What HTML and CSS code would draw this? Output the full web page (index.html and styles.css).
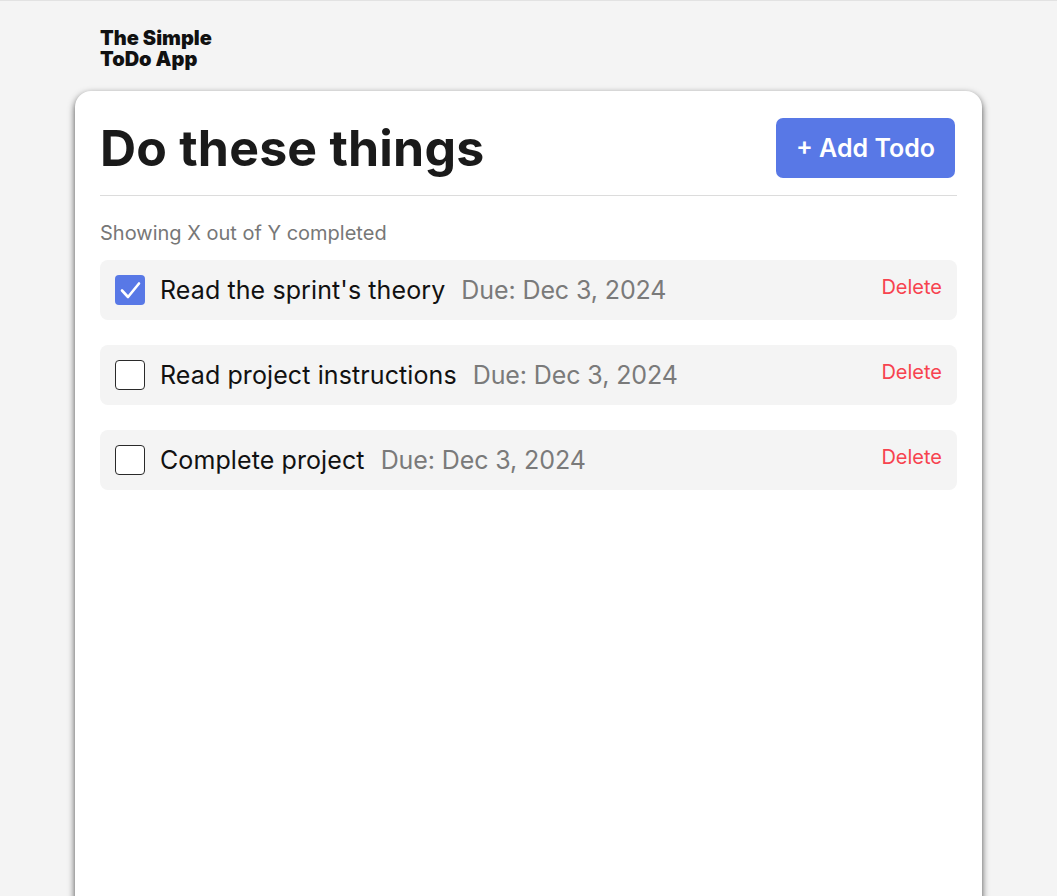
FILE: index.html
```html
<!DOCTYPE html>
<html lang="en">
<head>
<meta charset="utf-8">
<title>The Simple ToDo App</title>
<link rel="stylesheet" href="styles.css">
</head>
<body>
<header class="site-header">
  <div class="logo">The Simple<br>ToDo App</div>
</header>
<main class="card">
  <div class="card-head">
    <h1 class="title">Do these things</h1>
    <button class="add-btn">+ Add Todo</button>
  </div>
  <p class="status">Showing X out of Y completed</p>
  <ul class="todo-list">
    <li class="todo">
      <span class="check checked">
        <svg viewBox="0 0 30 30" width="30" height="30"><path d="M7 15.5l6 6.5L24 8.5" fill="none" stroke="#fff" stroke-width="2.6" stroke-linecap="round" stroke-linejoin="round"/></svg>
      </span>
      <span class="todo-title">Read the sprint's theory</span>
      <span class="todo-due">Due: Dec 3, 2024</span>
      <button class="delete">Delete</button>
    </li>
    <li class="todo">
      <span class="check"></span>
      <span class="todo-title">Read project instructions</span>
      <span class="todo-due">Due: Dec 3, 2024</span>
      <button class="delete">Delete</button>
    </li>
    <li class="todo">
      <span class="check"></span>
      <span class="todo-title">Complete project</span>
      <span class="todo-due">Due: Dec 3, 2024</span>
      <button class="delete">Delete</button>
    </li>
  </ul>
</main>
</body>
</html>
```

FILE: styles.css
```css
* { box-sizing: border-box; }
html, body { height: 100%; }
body {
  margin: 0;
  background: #f4f4f4;
  border-top: 1px solid #e2e2e2;
  font-family: Inter, "Noto Sans", sans-serif;
  color: #1a1a1a;
  overflow: hidden;
}
.site-header {
  padding: 27px 0 0 100px;
  height: 90px;
}
.logo {
  font-size: 20px;
  line-height: 21px;
  font-weight: 900;
  letter-spacing: 0;
  color: #111;
}
.card {
  margin: 0 75px 0 75px;
  width: 907px;
  min-height: 900px;
  background: #fff;
  border-radius: 16px 16px 0 0;
  box-shadow: 0 3px 7px rgba(0,0,0,0.7);
  padding: 27px 25px 25px;
}
.card-head {
  display: flex;
  justify-content: space-between;
  align-items: center;
  padding: 0 2px 17px 0;
  border-bottom: 1px solid #dcdcdc;
}
.title {
  margin: 0;
  font-size: 50px;
  font-weight: 700;
  letter-spacing: 0.2px;
  line-height: 60px;
  color: #1a1a1a;
}
.add-btn {
  border: 0;
  background: #5878e6;
  color: #fff;
  font-family: inherit;
  font-size: 25px;
  font-weight: 600;
  height: 60px;
  width: 179px;
  border-radius: 7px;
  padding: 0;
}
.status {
  margin: 24px 0 14px;
  font-size: 20px;
  line-height: 26px;
  color: #777;
}
.todo-list {
  list-style: none;
  margin: 0;
  padding: 0;
  display: flex;
  flex-direction: column;
  gap: 25px;
}
.todo {
  display: flex;
  align-items: center;
  height: 60px;
  background: #f4f4f4;
  border-radius: 8px;
  padding: 0 15px;
}
.check {
  width: 30px;
  height: 30px;
  border: 1.5px solid #2a2a2a;
  border-radius: 4px;
  background: #fff;
  flex: none;
  display: block;
}
.check.checked {
  background: #5878e6;
  border: 0;
}
.check svg { display: block; }
.todo-title {
  margin-left: 15px;
  font-size: 25px;
  letter-spacing: 0.1px;
  color: #111;
}
.todo-due {
  margin-left: 16px;
  font-size: 25px;
  letter-spacing: -0.1px;
  color: #7a7a7a;
}
.delete {
  margin-left: auto;
  align-self: flex-start;
  margin-top: 15px;
  border: 0;
  background: none;
  padding: 0;
  font-family: inherit;
  font-size: 20px;
  line-height: 24px;
  color: #f7434f;
}
```
